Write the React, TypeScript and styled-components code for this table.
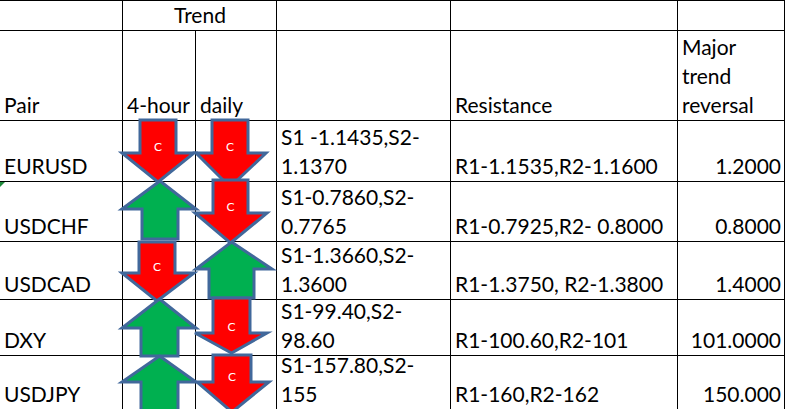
import React from "react";
import styled, { createGlobalStyle } from "styled-components";

const GlobalStyle = createGlobalStyle`
  html, body {
    margin: 0;
    padding: 0;
    background: #fff;
    overflow: hidden;
  }
`;

interface PairRow {
  pair: string;
  support: [string, string];
  resistance: string;
  major: string;
  flagged?: boolean;
}

const rows: PairRow[] = [
  { pair: "EURUSD", support: ["S1 -1.1435,S2-", "1.1370"], resistance: "R1-1.1535,R2-1.1600", major: "1.2000" },
  { pair: "USDCHF", support: ["S1-0.7860,S2-", "0.7765"], resistance: "R1-0.7925,R2- 0.8000", major: "0.8000", flagged: true },
  { pair: "USDCAD", support: ["S1-1.3660,S2-", "1.3600"], resistance: "R1-1.3750, R2-1.3800", major: "1.4000" },
  { pair: "DXY", support: ["S1-99.40,S2-", "98.60"], resistance: "R1-100.60,R2-101", major: "101.0000" },
  { pair: "USDJPY", support: ["S1-157.80,S2-", "155"], resistance: "R1-160,R2-162", major: "150.000" },
];

// block arrows floating over the sheet, in page pixels
interface Shape {
  dir: "up" | "down";
  l: number;
  r: number;
  t: number;
  b: number;
  sl: number;
  sr: number;
  head: number;
}

const shapes: Shape[] = [
  { dir: "down", l: 122, r: 194, t: 120, b: 182, sl: 140, sr: 176, head: 153 },
  { dir: "down", l: 196, r: 266, t: 120, b: 187, sl: 212, sr: 248, head: 153 },
  { dir: "up", l: 122, r: 196, t: 181, b: 239, sl: 142, sr: 178, head: 209 },
  { dir: "down", l: 195, r: 267, t: 180, b: 243, sl: 213, sr: 248, head: 213 },
  { dir: "down", l: 122, r: 194, t: 242, b: 301, sl: 139, sr: 175, head: 273 },
  { dir: "up", l: 196, r: 272, t: 242, b: 298, sl: 209, sr: 254, head: 269 },
  { dir: "up", l: 122, r: 196, t: 299, b: 356, sl: 141, sr: 178, head: 328 },
  { dir: "down", l: 195, r: 267, t: 298, b: 353, sl: 213, sr: 250, head: 333 },
  { dir: "up", l: 122, r: 196, t: 356, b: 416, sl: 141, sr: 178, head: 382 },
  { dir: "down", l: 197, r: 269, t: 355, b: 412, sl: 213, sr: 251, head: 382 },
];

const Sheet = styled.div`
  position: relative;
  display: grid;
  grid-template-columns: 122px 72px 80px 173px 226px 106px;
  grid-template-rows: 29px 89px 60px 59px 57px 55px 53px;
  gap: 1px;
  padding: 1px 1px 0 0;
  width: max-content;
  background: #000;
  font-family: Lato, "Liberation Sans", sans-serif;
  font-size: 21px;
  color: #000;
`;

const Cell = styled.div<{ $align?: "left" | "right" | "center"; $span?: number }>`
  position: relative;
  grid-column: span ${(p) => p.$span ?? 1};
  display: flex;
  flex-direction: column;
  justify-content: flex-end;
  align-items: ${(p) =>
    p.$align === "right" ? "flex-end" : p.$align === "center" ? "center" : "flex-start"};
  padding: 0 3px 1px 4px;
  background: #fff;
  line-height: 29px;
  white-space: pre;
  overflow: visible;
`;

const ErrorFlag = styled.span`
  position: absolute;
  left: 0;
  top: 0;
  width: 0;
  height: 0;
  border-top: 5px solid #1f8a3b;
  border-right: 5px solid transparent;
`;

const ArrowSvg = styled.svg`
  position: absolute;
  overflow: visible;
  pointer-events: none;
`;

function Arrow({ s }: { s: Shape }) {
  const pad = 3;
  const w = s.r - s.l;
  const h = s.b - s.t;
  const x = (v: number) => v - s.l + pad;
  const y = (v: number) => v - s.t + pad;
  const mid = (s.sl + s.sr) / 2;
  const pts =
    s.dir === "down"
      ? [
          [s.sl, s.t], [s.sr, s.t], [s.sr, s.head], [s.r, s.head],
          [mid, s.b], [s.l, s.head], [s.sl, s.head],
        ]
      : [
          [mid, s.t], [s.r, s.head], [s.sr, s.head], [s.sr, s.b],
          [s.sl, s.b], [s.sl, s.head], [s.l, s.head],
        ];
  const red = s.dir === "down";
  return (
    <ArrowSvg
      width={w + pad * 2}
      height={h + pad * 2}
      style={{ left: s.l - pad, top: s.t - pad }}
    >
      <polygon
        points={pts.map(([a, b]) => `${x(a)},${y(b)}`).join(" ")}
        fill={red ? "#ff0000" : "#00b050"}
        stroke="#41689b"
        strokeWidth={3}
        strokeLinejoin="miter"
      />
      {red && (
        <text
          x={x(mid)}
          y={y(s.t + (s.head - s.t) * 0.8)}
          fill="#fff"
          fontSize={12}
          fontFamily="Lato, 'Liberation Sans', sans-serif"
          textAnchor="middle"
          dominantBaseline="central"
        >
          C
        </text>
      )}
    </ArrowSvg>
  );
}

export default function App() {
  return (
    <>
      <GlobalStyle />
      <Sheet>
        <Cell />
        <Cell $span={2} $align="center">Trend</Cell>
        <Cell />
        <Cell />
        <Cell />

        <Cell>Pair</Cell>
        <Cell>4-hour</Cell>
        <Cell>daily</Cell>
        <Cell />
        <Cell>Resistance</Cell>
        <Cell>
          <span>Major</span>
          <span>trend</span>
          <span>reversal</span>
        </Cell>

        {rows.map((row) => (
          <React.Fragment key={row.pair}>
            <Cell>
              {row.flagged && <ErrorFlag />}
              {row.pair}
            </Cell>
            <Cell />
            <Cell />
            <Cell>
              <span>{row.support[0]}</span>
              <span>{row.support[1]}</span>
            </Cell>
            <Cell>{row.resistance}</Cell>
            <Cell $align="right">{row.major}</Cell>
          </React.Fragment>
        ))}

        {shapes.map((s, i) => (
          <Arrow key={i} s={s} />
        ))}
      </Sheet>
    </>
  );
}
